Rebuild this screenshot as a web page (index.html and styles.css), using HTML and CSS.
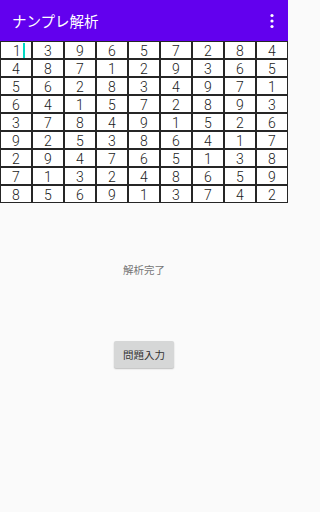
FILE: index.html
```html
<!DOCTYPE html>
<html lang="ja">
<head>
<meta charset="utf-8">
<link rel="stylesheet" href="styles.css">
</head>
<body>
<div class="screen">
  <header class="appbar">
    <div class="title">ナンプレ解析</div>
    <svg class="menu" width="6" height="16" viewBox="0 0 6 16">
      <circle cx="3" cy="2.5" r="1.6" fill="#fff"/>
      <circle cx="3" cy="8" r="1.6" fill="#fff"/>
      <circle cx="3" cy="13.5" r="1.6" fill="#fff"/>
    </svg>
  </header>
  <div class="board">
    <div class="cell first">1<span class="cursor"></span></div><div class="cell">3</div><div class="cell">9</div><div class="cell">6</div><div class="cell">5</div><div class="cell">7</div><div class="cell">2</div><div class="cell">8</div><div class="cell">4</div>
    <div class="cell">4</div><div class="cell">8</div><div class="cell">7</div><div class="cell">1</div><div class="cell">2</div><div class="cell">9</div><div class="cell">3</div><div class="cell">6</div><div class="cell">5</div>
    <div class="cell">5</div><div class="cell">6</div><div class="cell">2</div><div class="cell">8</div><div class="cell">3</div><div class="cell">4</div><div class="cell">9</div><div class="cell">7</div><div class="cell">1</div>
    <div class="cell">6</div><div class="cell">4</div><div class="cell">1</div><div class="cell">5</div><div class="cell">7</div><div class="cell">2</div><div class="cell">8</div><div class="cell">9</div><div class="cell">3</div>
    <div class="cell">3</div><div class="cell">7</div><div class="cell">8</div><div class="cell">4</div><div class="cell">9</div><div class="cell">1</div><div class="cell">5</div><div class="cell">2</div><div class="cell">6</div>
    <div class="cell">9</div><div class="cell">2</div><div class="cell">5</div><div class="cell">3</div><div class="cell">8</div><div class="cell">6</div><div class="cell">4</div><div class="cell">1</div><div class="cell">7</div>
    <div class="cell">2</div><div class="cell">9</div><div class="cell">4</div><div class="cell">7</div><div class="cell">6</div><div class="cell">5</div><div class="cell">1</div><div class="cell">3</div><div class="cell">8</div>
    <div class="cell">7</div><div class="cell">1</div><div class="cell">3</div><div class="cell">2</div><div class="cell">4</div><div class="cell">8</div><div class="cell">6</div><div class="cell">5</div><div class="cell">9</div>
    <div class="cell">8</div><div class="cell">5</div><div class="cell">6</div><div class="cell">9</div><div class="cell">1</div><div class="cell">3</div><div class="cell">7</div><div class="cell">4</div><div class="cell">2</div>
  </div>
  <div class="status">解析完了</div>
  <button class="btn">問題入力</button>
</div>
</body>
</html>
```

FILE: styles.css
```css
html, body {
  margin: 0;
  padding: 0;
  background: #fafafa;
}
.screen {
  width: 288px;
  height: 512px;
  display: flex;
  flex-direction: column;
  align-items: center;
  font-family: Roboto, "Noto Sans CJK JP", sans-serif;
  background: #fafafa;
}
.appbar {
  width: 100%;
  height: 41px;
  box-sizing: border-box;
  background: #6200ee;
  display: flex;
  align-items: center;
  justify-content: space-between;
  padding: 0 12px 0 12px;
  flex-shrink: 0;
}
.title {
  color: #fff;
  font-size: 14.5px;
  font-weight: 400;
}
.menu {
  display: block;
  margin-right: 1px;
}
.board {
  width: 288px;
  display: grid;
  grid-template-columns: repeat(9, 32px);
  grid-auto-rows: 18px;
  background: #fff;
}
.cell {
  box-sizing: border-box;
  border: 1px solid #262626;
  display: flex;
  align-items: center;
  justify-content: center;
  font-size: 14px;
  font-weight: 300;
  color: #1a1a1a;
  background: #fff;
  line-height: 1;
  padding-top: 1px;
}
.cell.first {
  justify-content: flex-start;
  padding-left: 12px;
}
.cursor {
  display: inline-block;
  width: 2px;
  height: 15px;
  background: #03dac5;
  margin-left: 2px;
}
.status {
  margin-top: 61px;
  font-size: 10.5px;
  line-height: 14px;
  color: #757575;
}
.btn {
  margin-top: 63px;
  height: 27px;
  padding: 0 9px;
  border: none;
  border-radius: 2px;
  background: #d6d7d7;
  color: #333;
  font-family: Roboto, "Noto Sans CJK JP", sans-serif;
  font-size: 10.5px;
  box-shadow: 0 1px 1.5px rgba(0,0,0,0.25);
}
```
